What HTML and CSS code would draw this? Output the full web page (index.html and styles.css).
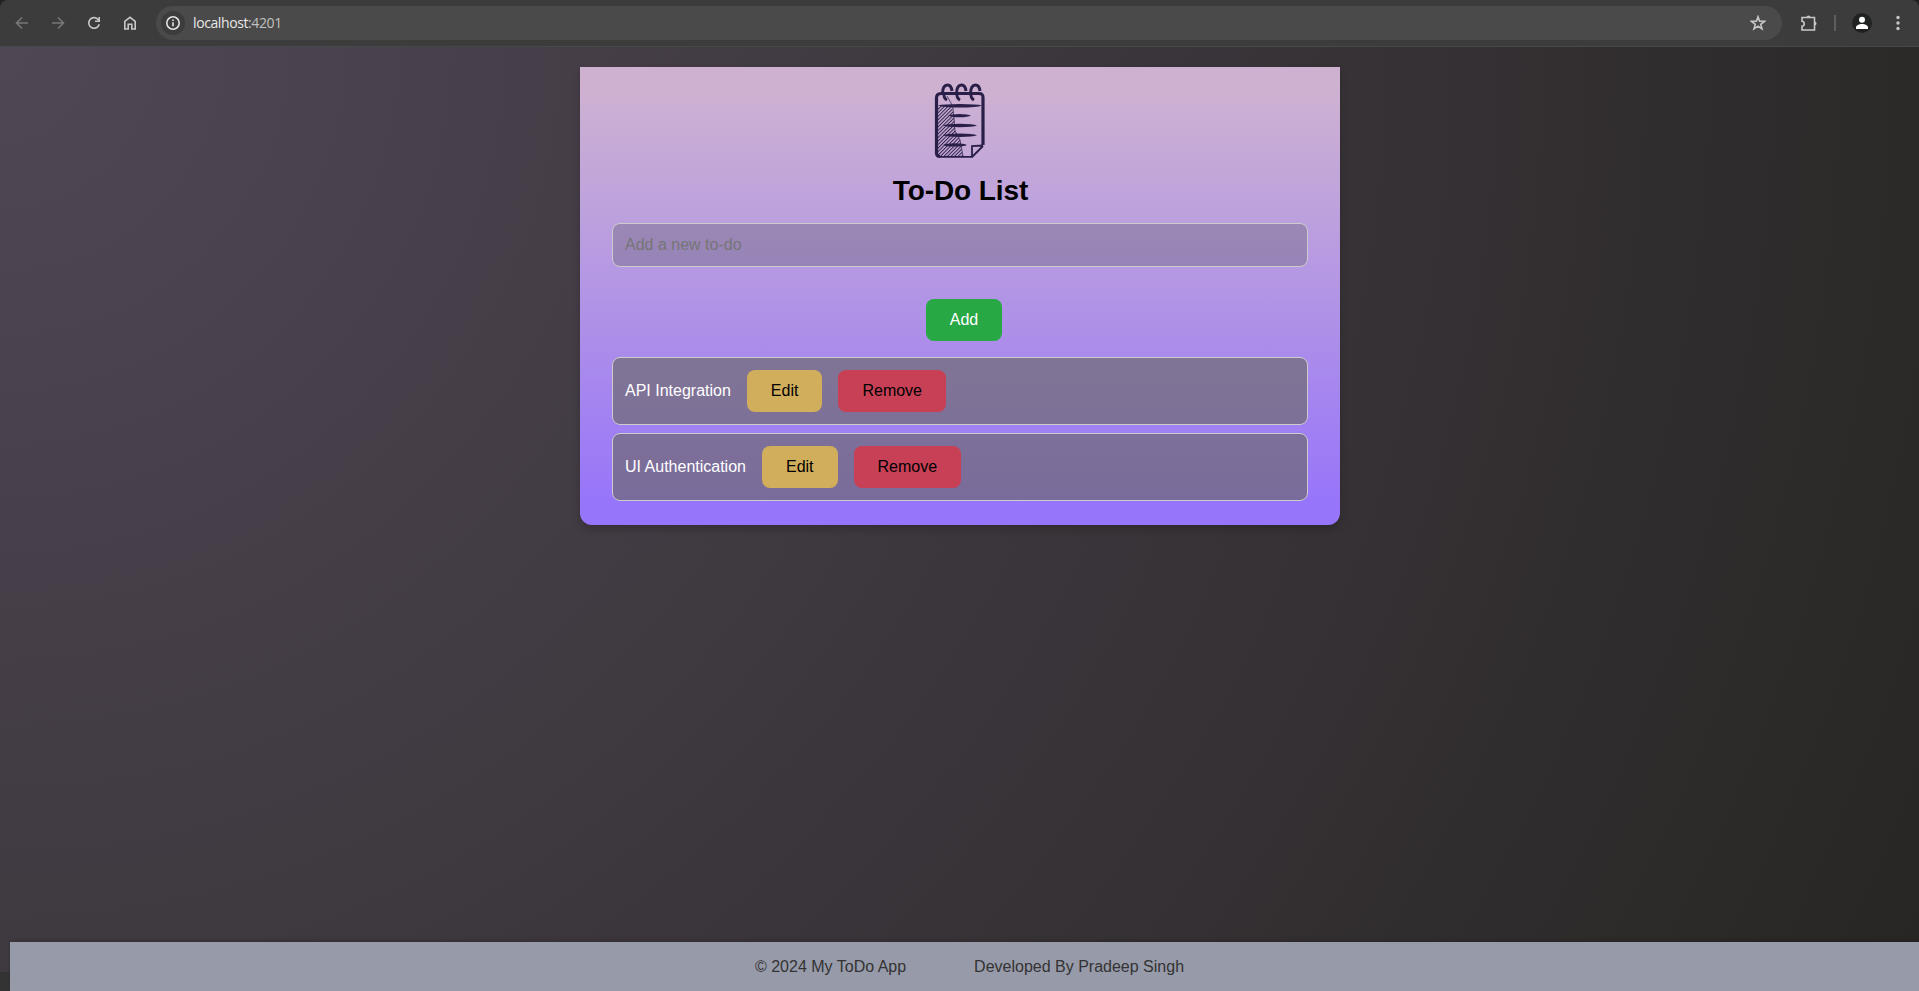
FILE: index.html
```
<!DOCTYPE html>
<html lang="en">
<head>
<meta charset="utf-8">
<title>To-Do List</title>
<link rel="stylesheet" href="styles.css">
</head>
<body>
<header class="toolbar">
  <svg class="nav dim" viewBox="0 0 16 16"><path d="M14 8H3M8 2.500 2.500 8 8 13.500"/></svg>
  <svg class="nav dim" viewBox="0 0 16 16"><path d="M2 8h11M8 2.500 13.500 8 8 13.500"/></svg>
  <svg class="nav" viewBox="0 0 16 16"><path d="M13.200 9.200A5.300 5.300 0 1 1 11.800 4.200L13.200 5.700M13.200 2v4.200H9"/></svg>
  <svg class="nav" viewBox="0 0 16 16"><path d="M2.800 14V6.500L8 2.300l5.200 4.200V14H9.800V9.300H6.200V14Z"/></svg>
  <div class="address">
    <span class="info"><svg viewBox="0 0 16 16"><circle cx="8" cy="8" r="6.200"/><path d="M8 7.200v4M8 4.500v1.600"/></svg></span>
    <span class="url">localhost<span class="port">:4201</span></span>
    <svg class="star" viewBox="0 0 16 16"><path d="m8 1.800 1.600 4.400 4.900.1-3.800 3 1.300 4.600L8 11.200l-4 2.700 1.300-4.600-3.800-3 4.900-.1Z"/></svg>
  </div>
  <svg class="puzzle" viewBox="0 0 18 18"><path d="M2 3.500h12.500v12.500H2V12.200c3-.2 3-4.700 0-4.900Z"/><path class="solid" d="M6.500 3.500a2 2 0 0 1 4 0ZM14.500 7.500a2 2 0 0 1 0 4Z"/></svg>
  <span class="divider"></span>
  <svg class="avatar" viewBox="0 0 20 20"><circle cx="10" cy="10" r="10" fill="#202222"/><circle cx="10" cy="6.800" r="3" fill="#fff"/><path d="M4 16v-1.500c0-2.300 3-3.500 6-3.500s6 1.200 6 3.500V16Z" fill="#fff"/></svg>
  <svg class="dots" viewBox="0 0 4 16"><circle cx="2" cy="2.500" r="1.700"/><circle cx="2" cy="8" r="1.700"/><circle cx="2" cy="13.500" r="1.700"/></svg>
</header>
<div class="page">
  <main class="card">
    <svg class="notepad" viewBox="0 0 80 100">
      <defs><pattern id="hatch" width="2.500" height="2.500" patternUnits="userSpaceOnUse" patternTransform="rotate(45)"><path d="M0 0v3" stroke="#2a1f48" stroke-width="2"/></pattern></defs>
      <path d="M18 36h14l2 12 1 12 5 9 3 18H18Z" fill="url(#hatch)"/>
      <path d="M27 26l4 7 2 5 1 10 1 13 5 9 3 16" fill="none" stroke="#2a1f48" stroke-width=".7"/>
      <path d="M20 86.500c-2 0-3.500-1-3.500-3.500V28c0-3 1.500-4.500 4.500-4.500h38c3 0 4 1 4 4V75" fill="none" stroke="#2a1f48" stroke-width="3.200"/>
      <path d="M19 86.800H53" fill="none" stroke="#2a1f48" stroke-width="1.800"/>
      <path d="M63 76 52.500 86.500M52 87V76l11-.5" fill="none" stroke="#2a1f48" stroke-width="1.800"/>
      <g fill="none" stroke="#2a1f48" stroke-width="3"><path d="M22.500 24c0-6 2-9 5-9s4 2 4.500 6M24 22c-.5 4 1 7 3 8"/><path d="M36.500 24c0-6 2-9 5-9s4 2 4.500 6M37 22c-.5 4 1 7 3 8"/><path d="M50.500 24c0-6 2-9 5-9s4 2 4.500 6M51 22c-.5 4 1 7 3 8"/></g>
      <g fill="#2a1f48"><path d="M18 35.500q5-1.500 22-1.500t22 1.500q-5 2-22 2t-22-2ZM28 45.500q3-1.600 11.500-1.600T51 45.500q-3 1.800-11.500 1.800T28 45.500ZM23 55.500q4-1.700 17-1.700t17 1.700q-4 1.700-17 1.700t-17-1.700ZM23 65.200q4-1.700 17-1.700t17 1.700q-4 1.700-17 1.700t-17-1.700ZM23 74.900q3-1.700 12-1.700t12 1.700q-3 1.700-12 1.700t-12-1.700Z"/></g>
    </svg>
    <h1 class="title">To-Do List</h1>
    <input class="entry" type="text" placeholder="Add a new to-do">
    <button class="btn add">Add</button>
    <ul class="list">
      <li class="item"><span>API Integration</span><button class="btn edit">Edit</button><button class="btn remove">Remove</button></li>
      <li class="item"><span>UI Authentication</span><button class="btn edit">Edit</button><button class="btn remove">Remove</button></li>
    </ul>
  </main>
  <footer class="footer"><span>© 2024 My ToDo App</span><span>Developed By Pradeep Singh</span></footer>
</div>
</body>
</html>
```
FILE: styles.css
```
* { box-sizing: border-box; }
html { height: 100%; background: #333; }
body { margin: 0; height: 991px; display: flex; flex-direction: column; overflow: hidden; font: 16px "Liberation Sans", Arial, sans-serif; background: #202222; }
.toolbar { height: 47px; flex: none; display: flex; align-items: center; background: #3c3c3c; border-bottom: 1px solid #484848; border-radius: 8px 8px 0 0; padding: 0 19px 0 14px; }
.nav { width: 16px; height: 16px; margin-right: 20px; flex: none; }
.toolbar svg { fill: none; stroke: #c7c7c7; stroke-width: 1.6; }
.toolbar .dim { stroke: #777; }
.address { flex: 1; height: 34px; margin-left: -2px; border-radius: 17px; background: #4a4a4a; display: flex; align-items: center; padding: 0 16px 0 5px; }
.info { width: 24px; height: 24px; border-radius: 50%; background: #3c3c3c; display: grid; place-items: center; }
.info svg { width: 16px; height: 16px; stroke: #e3e3e3; }
.url { margin: -2px 0 0 8px; color: #e8e8e8; font: 14px "Open Sans", "Noto Sans", sans-serif; letter-spacing: -.4px; }
.port { color: #c0c0c0; }
.star { width: 16px; height: 16px; margin-left: auto; }
.puzzle { width: 18px; height: 18px; margin-left: 18px; }
.toolbar .solid { fill: #c7c7c7; stroke: none; }
.divider { width: 2px; height: 16px; background: #5e5e5e; margin: 0 16px; }
.toolbar .avatar { width: 20px; height: 20px; stroke: none; }
.toolbar .dots { width: 4px; height: 16px; margin-left: 24px; fill: #c7c7c7; stroke: none; }
.page { flex: 1; min-height: 0; display: flex; flex-direction: column; align-items: center; background: #333 radial-gradient(circle farthest-corner at 0 0, #504755 0%, #282624 100%) 0 0 / 100% 925px no-repeat; }
.card { width: 760px; height: 458px; margin: 20px 0 0 1px; padding: 10px 32px 24px; display: flex; flex-direction: column; align-items: center; border-radius: 0 0 12px 12px; background: linear-gradient(180deg, #ceb1d1 5%, #bda1dd 32%, #9775fa 95%); box-shadow: 0 4px 8px rgba(0,0,0,.2); }
.notepad { width: 80px; height: 100px; margin-top: -7px; flex: none; }
.title { margin: 5px 0 0 1px; font-size: 28px; line-height: 32px; letter-spacing: -.1px; }
.entry { width: 100%; height: 44px; margin-top: 16px; flex: none; padding: 0 12px; border: 1px solid #ccc; border-radius: 8px; background: rgba(104,99,121,.4); font: inherit; }
.entry::placeholder { color: #757575; }
.btn { height: 42px; border: 0; border-radius: 8px; padding: 0 24px; font: inherit; color: #000; }
.add { margin: 32px 0 0 8px; background: #28a745; color: #fff; flex: none; }
.list { width: 100%; list-style: none; margin: 16px 0 0; padding: 0; display: flex; flex-direction: column; gap: 8px; }
.item { height: 68px; padding: 0 12px; display: flex; align-items: center; gap: 16px; border: 1px solid #ccc; border-radius: 8px; background: rgba(102,101,92,.6); color: #fff; }
.edit { background: #d0ae5c; }
.remove { background: #c74056; }
.footer { align-self: stretch; margin: auto 0 0 10px; height: 49px; flex: none; display: flex; justify-content: center; align-items: center; gap: 68px; padding-left: 10px; background: #979aa9; color: #333; box-shadow: 0 -2px 4px rgba(0,0,0,.15); }
```
